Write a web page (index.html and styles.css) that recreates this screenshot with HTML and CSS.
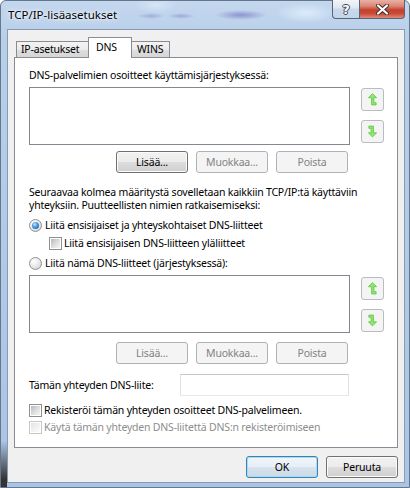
FILE: index.html
```html
<!DOCTYPE html>
<html lang="fi">
<head>
  <meta charset="UTF-8">
  <title>TCP/IP-lisäasetukset</title>
  <link rel="stylesheet" href="styles.css">
</head>
<body>
  <div class="window">
    <!-- Title bar -->
    <div class="titlebar">
      <span class="title">TCP/IP-lisäasetukset</span>
      <div class="caption-buttons">
        <span class="cap-btn help">?</span>
        <span class="cap-btn close">
          <svg width="13" height="11" viewBox="0 0 13 11">
            <path d="M2 1.5 L11 9.5 M11 1.5 L2 9.5" stroke="#3b2f2f" stroke-width="4" stroke-linecap="round"/>
            <path d="M2 1.5 L11 9.5 M11 1.5 L2 9.5" stroke="#fff" stroke-width="2.2" stroke-linecap="round"/>
          </svg>
        </span>
      </div>
    </div>

    <div class="client">
      <!-- Tabs -->
      <div class="tabs">
        <div class="tab tab-ip">IP-asetukset</div>
        <div class="tab tab-dns active">DNS</div>
        <div class="tab tab-wins">WINS</div>
      </div>

      <div class="panel">
        <div class="label">DNS-palvelimien osoitteet käyttämisjärjestyksessä:</div>
        <div class="list-row">
          <div class="listbox"></div>
          <div class="arrows">
            <span class="arrow-btn">
              <svg width="9" height="13" viewBox="0 0 10 14">
                <polygon points="5,0.5 9.5,5 6.5,5 6.5,10.5 9,10.5 9,13 4,13 4,5 0.5,5" fill="#8ee86e" stroke="#66c84a" stroke-width="1" stroke-linejoin="round"/>
              </svg>
            </span>
            <span class="arrow-btn">
              <svg width="9" height="13" viewBox="0 0 10 14">
                <polygon points="1,1 6,1 6,8.5 9.5,8.5 5,13 0.5,8.5 3.5,8.5 3.5,3.5 1,3.5" fill="#8ee86e" stroke="#66c84a" stroke-width="1" stroke-linejoin="round"/>
              </svg>
            </span>
          </div>
        </div>
        <div class="btn-row">
          <button class="btn" type="button">Lisää...</button>
          <button class="btn disabled" type="button">Muokkaa...</button>
          <button class="btn disabled" type="button">Poista</button>
        </div>

        <p class="note">
          <span>Seuraavaa kolmea määritystä sovelletaan kaikkiin TCP/IP:tä käyttäviin</span>
          <span>yhteyksiin. Puutteellisten nimien ratkaisemiseksi:</span>
        </p>

        <div class="option first"><span class="radio checked"></span>Liitä ensisijaiset ja yhteyskohtaiset DNS-liitteet</div>
        <div class="option sub"><span class="check"></span>Liitä ensisijaisen DNS-liitteen yläliitteet</div>
        <div class="option third"><span class="radio"></span>Liitä nämä DNS-liitteet (järjestyksessä):</div>

        <div class="list-row second">
          <div class="listbox"></div>
          <div class="arrows">
            <span class="arrow-btn">
              <svg width="9" height="13" viewBox="0 0 10 14">
                <polygon points="5,0.5 9.5,5 6.5,5 6.5,10.5 9,10.5 9,13 4,13 4,5 0.5,5" fill="#8ee86e" stroke="#66c84a" stroke-width="1" stroke-linejoin="round"/>
              </svg>
            </span>
            <span class="arrow-btn">
              <svg width="9" height="13" viewBox="0 0 10 14">
                <polygon points="1,1 6,1 6,8.5 9.5,8.5 5,13 0.5,8.5 3.5,8.5 3.5,3.5 1,3.5" fill="#8ee86e" stroke="#66c84a" stroke-width="1" stroke-linejoin="round"/>
              </svg>
            </span>
          </div>
        </div>
        <div class="btn-row second">
          <button class="btn disabled" type="button">Lisää...</button>
          <button class="btn disabled" type="button">Muokkaa...</button>
          <button class="btn disabled" type="button">Poista</button>
        </div>

        <div class="suffix-row">
          <span class="suffix-label">Tämän yhteyden DNS-liite:</span>
          <span class="textbox"></span>
        </div>

        <div class="option register"><span class="check"></span>Rekisteröi tämän yhteyden osoitteet DNS-palvelimeen.</div>
        <div class="option use disabled"><span class="check disabled"></span>Käytä tämän yhteyden DNS-liitettä DNS:n rekisteröimiseen</div>
      </div>

      <!-- Dialog buttons -->
      <div class="dialog-buttons">
        <button class="btn default" type="button">OK</button>
        <button class="btn" type="button">Peruuta</button>
      </div>
    </div>
  </div>
</body>
</html>
```

FILE: styles.css
```css
/* Base */
* {
  box-sizing: border-box;
}

body {
  margin: 0;
  font-family: "Noto Sans", "Open Sans", sans-serif;
  font-size: 10.5px;
  letter-spacing: -0.2px;
  line-height: 15px;
  color: #000;
  background: #fff;
}

/* Window frame (Aero glass) */
.window {
  width: 410px;
  height: 488px;
  display: flex;
  flex-direction: column;
  padding: 0 4px 4px 6px;
  border: 1px solid #66778c;
  border-radius: 6px 6px 0 0;
  background:
    linear-gradient(to bottom, rgba(40, 40, 40, 0) 440px, #343434 478px) left top / 6px 100% no-repeat,
    radial-gradient(ellipse 26px 5px at 240px 14px, rgba(128, 124, 200, 0.75), rgba(128, 124, 200, 0)),
    radial-gradient(ellipse 14px 3px at 180px 15px, rgba(128, 124, 200, 0.5), rgba(128, 124, 200, 0)),
    radial-gradient(ellipse 14px 3px at 150px 15px, rgba(128, 124, 200, 0.45), rgba(128, 124, 200, 0)),
    radial-gradient(ellipse 22px 8px at 155px 4px, rgba(225, 235, 250, 0.7), rgba(225, 235, 250, 0)),
    radial-gradient(ellipse 30px 10px at 305px 12px, rgba(222, 238, 252, 0.9), rgba(222, 238, 252, 0)),
    linear-gradient(to bottom, #c3d7ee 0, #b8cfea 40px, #a9c4e5 100%);
}

.titlebar {
  height: 28px;
  flex: none;
  display: flex;
  justify-content: space-between;
  align-items: flex-start;
}

.title {
  padding: 6px 0 0 1px;
  font-size: 11.5px;
  letter-spacing: 0;
  line-height: 16px;
  text-shadow: 0 0 6px #fff, 0 0 3px #fff;
}

.caption-buttons {
  display: flex;
  margin-top: -1px;
}

.cap-btn {
  height: 19px;
  display: flex;
  align-items: center;
  justify-content: center;
  border: 1px solid #56667a;
  border-top: none;
}

.help {
  width: 27px;
  border-right: none;
  border-radius: 0 0 0 4px;
  background: linear-gradient(to bottom, #f2f5f9 0, #dfe7f1 45%, #c9d8ea 50%, #c4d5ea 100%);
  color: #fff;
  font-family: "DejaVu Sans", sans-serif;
  font-weight: bold;
  font-size: 13px;
  letter-spacing: 0;
  text-shadow: 1px 0 #3c4450, -1px 0 #3c4450, 0 1px #3c4450, 0 -1px #3c4450;
}

.close {
  width: 46px;
  border-radius: 0 0 4px 0;
  background: linear-gradient(to bottom, #eab1a6 0, #d98474 35%, #c5402d 55%, #c94a36 75%, #e28a79 100%);
}

/* Client area */
.client {
  flex: 1;
  background: #f0f0f0;
  border: 1px solid #8a9bb0;
  padding: 7px 6px 0;
}

/* Tabs */
.tabs {
  position: relative;
  z-index: 1;
  display: flex;
  align-items: flex-end;
  height: 21px;
  margin-bottom: -1px;
  padding-left: 2px;
}

.tab {
  height: 16px;
  margin-bottom: 1px;
  padding-left: 4px;
  border: 1px solid #898c95;
  border-bottom: none;
  background: linear-gradient(to bottom, #f3f3f3 0, #ebebeb 50%, #dedede 50%, #d6d6d6 100%);
  line-height: 14px;
  white-space: nowrap;
}

.tab-ip {
  width: 72px;
  border-right: none;
}

.tab-dns {
  width: 44px;
}

.tab-wins {
  width: 38px;
  border-left: none;
  padding-left: 5px;
}

.tab.active {
  height: 21px;
  margin-bottom: 0;
  padding: 2px 0 0 7px;
  background: #fff;
}

/* Tab page */
.panel {
  height: 391px;
  background: #fff;
  border: 1px solid #898c95;
  padding: 10px 13px 0 14px;
}

.label {
  margin-bottom: 4px;
}

.list-row {
  display: flex;
  gap: 11px;
}

.listbox {
  width: 321px;
  height: 58px;
  border: 1px solid #828790;
  background: #fff;
}

.arrows {
  display: flex;
  flex-direction: column;
  gap: 9px;
  padding-top: 1px;
}

.list-row.second .arrows {
  padding-top: 2px;
}

.arrow-btn {
  width: 23px;
  height: 23px;
  display: flex;
  align-items: center;
  justify-content: center;
  border: 1px solid #b9bcc0;
  border-radius: 3px;
  background: #f4f4f4;
}

.btn-row {
  width: 321px;
  display: flex;
  justify-content: flex-end;
  gap: 8px;
  padding-right: 2px;
  margin-top: 6px;
}

.btn-row.second {
  margin-top: 9px;
}

/* Buttons */
.btn {
  width: 72px;
  height: 22px;
  padding: 0;
  font-family: inherit;
  font-size: 10.5px;
  letter-spacing: -0.2px;
  color: #000;
  border: 1px solid #707070;
  border-radius: 3px;
  background: linear-gradient(to bottom, #f2f2f2 0, #ebebeb 50%, #dddddd 50%, #cfcfcf 100%);
  box-shadow: inset 0 0 0 1px #fbfbfb;
}

.btn.disabled {
  color: #838383;
  border-color: #adb2b5;
  background: #f4f4f4;
  box-shadow: none;
}

.btn.default {
  border-color: #3c7fb1;
  box-shadow: inset 0 0 0 1px #a5dcf7;
  background: linear-gradient(to bottom, #f0f6fa 0, #e6eef5 50%, #d7e3ee 50%, #cbd9e6 100%);
}

/* Static text */
.note {
  margin: 13px 0 0;
  line-height: 13px;
}

.note span {
  display: block;
  white-space: nowrap;
}

/* Radio buttons and checkboxes */
.option {
  height: 16px;
  display: flex;
  align-items: center;
  gap: 3px;
  white-space: nowrap;
}

.option.first {
  margin-top: 5px;
}

.option.sub {
  margin-top: 2px;
  margin-left: 20px;
  gap: 2px;
}

.option.third {
  margin-top: 4px;
}

.option.register {
  margin-top: 6px;
  gap: 2px;
}

.option.use {
  margin-top: 1px;
  gap: 2px;
}

.option.disabled {
  color: #8d8d8d;
}

.radio {
  width: 13px;
  height: 13px;
  flex: none;
  display: flex;
  align-items: center;
  justify-content: center;
  border: 1px solid #8e9194;
  border-radius: 50%;
  background: radial-gradient(circle at 35% 30%, #ffffff 0, #e6e6e6 55%, #c9c9c9 100%);
}

.radio.checked::after {
  content: "";
  width: 7px;
  height: 7px;
  border-radius: 50%;
  background: radial-gradient(circle at 40% 35%, #c2e6ff 0, #4595dc 45%, #1a4c8a 100%);
}

.list-row.second {
  margin-top: 4px;
}

.check {
  width: 13px;
  height: 13px;
  flex: none;
  padding: 1px;
  border: 1px solid #8e8f8f;
  background: #fff;
}

.check::after {
  content: "";
  display: block;
  width: 9px;
  height: 9px;
  background: linear-gradient(135deg, #b4b8bc 0, #dcdcdc 50%, #f6f6f6 100%);
}

.check.disabled {
  border-color: #c6c6c6;
}

.check.disabled::after {
  background: linear-gradient(135deg, #e2e2e2 0, #f0f0f0 50%, #fbfbfb 100%);
}

/* DNS suffix field */
.suffix-row {
  display: flex;
  align-items: center;
  margin-top: 10px;
}

.suffix-label {
  width: 151px;
}

.textbox {
  width: 169px;
  height: 22px;
  border: 1px solid;
  border-color: #c4c7cb #dfe3e8 #e3e9ef #dfe3e8;
  background: #fff;
}

/* OK / Cancel */
.dialog-buttons {
  display: flex;
  justify-content: flex-end;
  gap: 8px;
  margin-top: 8px;
}
```
